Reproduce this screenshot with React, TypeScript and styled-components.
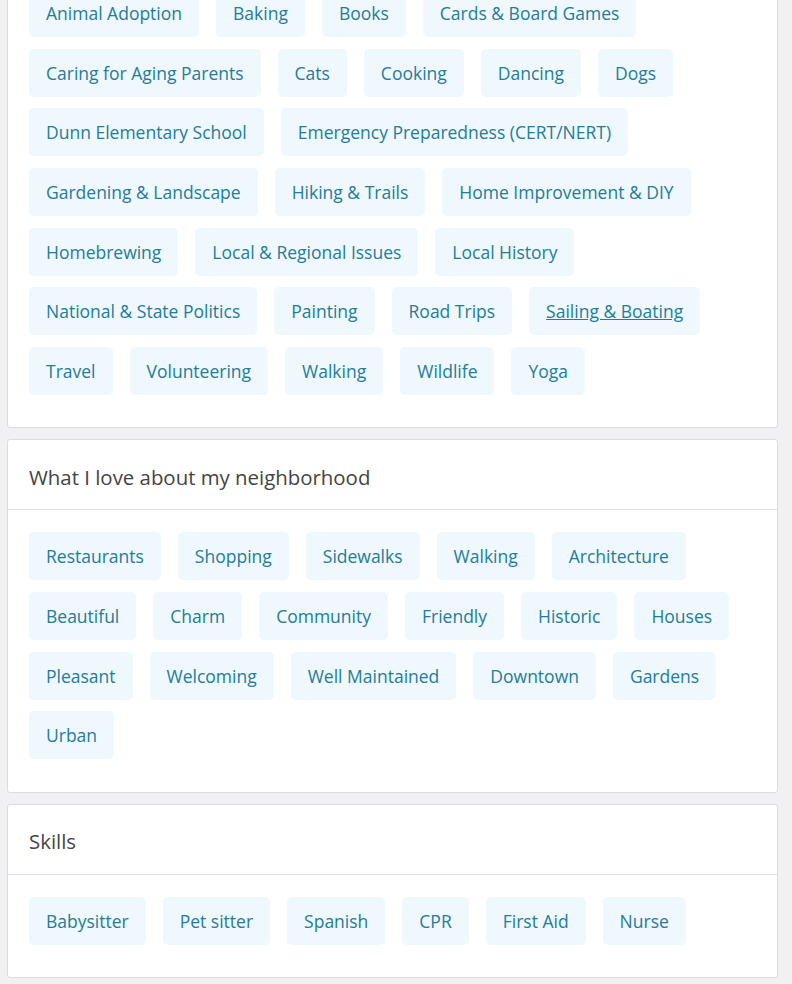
import styled, { createGlobalStyle } from "styled-components";

const GlobalStyle = createGlobalStyle`
  html, body {
    margin: 0;
    padding: 0;
    background: #f1f1f4;
  }
  body {
    font-family: "Open Sans", "Noto Sans", Arial, sans-serif;
    overflow: hidden;
  }
`;

const Page = styled.div`
  display: flex;
  flex-direction: column;
  gap: 11px;
  padding: 0 14px 20px 7px;
  margin-top: -104px;
`;

const Card = styled.section`
  background: #fff;
  border: 1px solid #dcdce0;
  border-radius: 3px;
`;

const CardHeader = styled.div`
  height: 70px;
  display: flex;
  align-items: center;
  padding: 4px 21px 0;
  box-sizing: border-box;
  border-bottom: 1px solid #e2e2e6;
`;

const Title = styled.h3`
  margin: 0;
  font-size: 20.4px;
  font-weight: 400;
  color: #444;
`;

const CardBody = styled.div`
  display: flex;
  flex-wrap: wrap;
  gap: 11.67px 17px;
  padding: 22px 21px 32.5px;
`;

const Tag = styled.a<{ $hover?: boolean }>`
  display: inline-flex;
  align-items: center;
  height: 48px;
  padding: 0 17px;
  border-radius: 5px;
  background: #eff8fc;
  color: #237c9b;
  font-size: 17.5px;
  text-decoration: ${({ $hover }) => ($hover ? "underline" : "none")};
  cursor: pointer;
  box-sizing: border-box;
`;

const sections: { title: string; tags: string[] }[] = [
  {
    title: "Interests",
    tags: [
      "Animal Adoption",
      "Baking",
      "Books",
      "Cards & Board Games",
      "Caring for Aging Parents",
      "Cats",
      "Cooking",
      "Dancing",
      "Dogs",
      "Dunn Elementary School",
      "Emergency Preparedness (CERT/NERT)",
      "Gardening & Landscape",
      "Hiking & Trails",
      "Home Improvement & DIY",
      "Homebrewing",
      "Local & Regional Issues",
      "Local History",
      "National & State Politics",
      "Painting",
      "Road Trips",
      "Sailing & Boating",
      "Travel",
      "Volunteering",
      "Walking",
      "Wildlife",
      "Yoga",
    ],
  },
  {
    title: "What I love about my neighborhood",
    tags: [
      "Restaurants",
      "Shopping",
      "Sidewalks",
      "Walking",
      "Architecture",
      "Beautiful",
      "Charm",
      "Community",
      "Friendly",
      "Historic",
      "Houses",
      "Pleasant",
      "Welcoming",
      "Well Maintained",
      "Downtown",
      "Gardens",
      "Urban",
    ],
  },
  {
    title: "Skills",
    tags: ["Babysitter", "Pet sitter", "Spanish", "CPR", "First Aid", "Nurse"],
  },
];

const App = () => {
  return (
    <>
      <GlobalStyle />
      <Page>
        {sections.map((section) => (
          <Card key={section.title}>
            <CardHeader>
              <Title>{section.title}</Title>
            </CardHeader>
            <CardBody>
              {section.tags.map((tag) => (
                <Tag key={tag} $hover={tag === "Sailing & Boating"}>
                  {tag}
                </Tag>
              ))}
            </CardBody>
          </Card>
        ))}
      </Page>
    </>
  );
};

export default App;
